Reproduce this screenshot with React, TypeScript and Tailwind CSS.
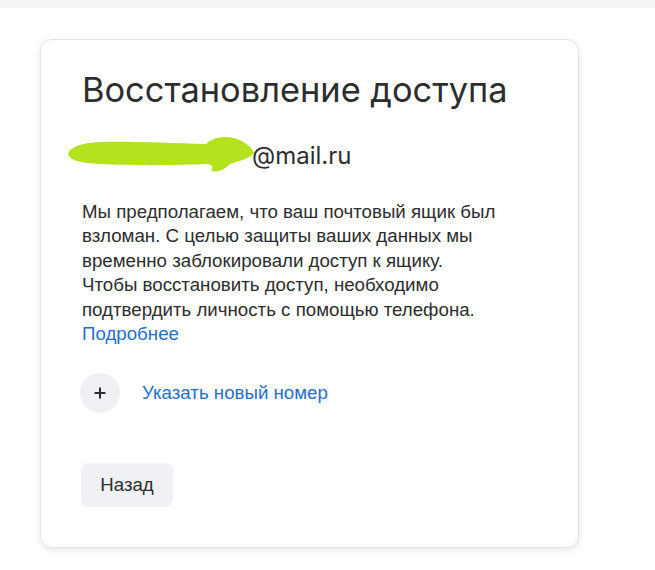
import { Plus } from "lucide-react";

function Scribble() {
  return (
    <svg width="200" height="50" viewBox="0 0 200 50" className="absolute left-[-22px] top-[-12px]">
      <path
        d="M8 25 C 10 18, 20 14, 40 13 C 70 12, 110 14, 146 15 C 150 10, 162 6, 174 9 C 184 12, 192 18, 194 24 C 190 29, 180 32, 170 35 C 166 39, 160 44, 152 42 C 150 39, 156 37, 148 35 C 120 36, 80 37, 40 35 C 22 34, 10 32, 8 25 Z"
        fill="#b5e21f"
      />
    </svg>
  );
}

export default function App() {
  return (
    <div className="min-h-[570px] bg-white" style={{ fontFamily: "'Liberation Sans', Arial, sans-serif" }}>
      <div className="h-2 bg-[#f4f5f7]" />
      <div className="pl-10 pt-[31px]">
        <div className="w-[539px] h-[509px] rounded-xl border border-[#e3e4e6] bg-white shadow-[0_2px_6px_rgba(0,0,0,0.1)] pl-[41px] pt-[28px]">
          <h1 className="text-[34.4px] leading-[44px] text-[#2c2d2e] font-normal" style={{ fontFamily: "Inter, 'Noto Sans', sans-serif" }}>
            Восстановление доступа
          </h1>
          <div className="mt-[29px] relative h-[30px]" style={{ fontFamily: "Inter, 'Noto Sans', sans-serif" }}>
            <span className="ml-[170px] text-[24px] leading-[30px] text-[#2c2d2e]">@mail.ru</span>
            <Scribble />
          </div>
          <p className="mt-[29px] text-[18.7px] leading-[24.4px] text-[#2c2d2e]">
            Мы предполагаем, что ваш почтовый ящик был
            <br />
            взломан. С целью защиты ваших данных мы
            <br />
            временно заблокировали доступ к ящику.
            <br />
            Чтобы восстановить доступ, необходимо
            <br />
            подтвердить личность с помощью телефона.
            <br />
            <span className="text-[#2470c9]">Подробнее</span>
          </p>
          <div className="mt-[27px] flex items-center gap-[22px] -ml-[2px]">
            <div className="w-10 h-10 rounded-full bg-[#eff0f3] flex items-center justify-center">
              <Plus className="w-4 h-4 text-[#2c2d2e]" strokeWidth={3} />
            </div>
            <span className="text-[18.7px] text-[#2470c9]">Указать новый номер</span>
          </div>
          <button className="mt-[50px] -ml-px h-11 w-[92px] rounded-lg bg-[#eff1f4] text-[18.7px] text-[#2c2d2e]">
            Назад
          </button>
        </div>
      </div>
    </div>
  );
}
